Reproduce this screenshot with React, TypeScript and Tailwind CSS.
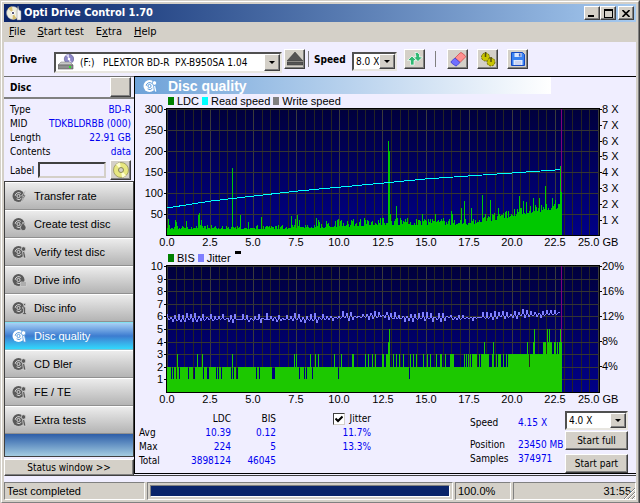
import type { ReactNode } from "react";
import clsx from "clsx";

const PLOT_W = 432;
const PLOT_H = 126;
const END_COL = 394;

const raised = "border border-t-white border-l-white border-r-[#404040] border-b-[#404040] bg-[#d4d0c8] shadow-[inset_-1px_-1px_0_#808080]";
const sunken = "border border-t-[#808080] border-l-[#808080] border-r-white border-b-white";

const xLabels = ["0.0", "2.5", "5.0", "7.5", "10.0", "12.5", "15.0", "17.5", "20.0", "22.5"];

// column in the plot -> bar height
const ldcPeaks: Record<number, number> = {
  1: 16, 8: 15, 9: 13, 19: 14, 31: 20, 32: 22, 34: 15, 65: 67, 73: 20, 81: 13, 94: 18, 111: 10,
  124: 19, 128: 16, 130: 20, 132: 15, 149: 17, 159: 14, 168: 14, 180: 14, 186: 16, 193: 16, 200: 15,
  205: 14, 211: 15, 221: 94, 222: 84, 223: 21, 224: 14, 229: 29, 255: 21, 268: 21, 284: 24, 285: 21,
  294: 27, 297: 34, 304: 27, 315: 40, 323: 35, 331: 27, 352: 39, 356: 34, 359: 33, 366: 37, 372: 37,
  378: 49, 385: 37, 388: 35, 391: 31, 393: 69, 394: 43,
};

const speedLine = "0,99 44,92 87,87 131,82 174,78 217,74 258,70 301,67 345,64 388,61 393,60";

const bisGaps = [
  4, 6, 9, 12, 21, 26, 27, 36, 40, 41, 49, 51, 54, 64, 66, 69, 70, 89, 92, 105, 106, 107, 132, 137, 139, 145, 171, 242,
];
const bisThree = [
  10, 30, 35, 65, 127, 129, 143, 148, 151, 167, 174, 185, 186, 198, 201, 205, 208, 215, 216, 219, 220,
  221, 226, 229, 232, 236, 243, 246, 249, 256, 260, 263, 269, 273, 274, 278, 283, 284, 285, 286, 297, 299,
  301, 303, 305, 306, 307, 308, 309, 312, 314, 315, 316, 317, 318, 319, 320, 321, 325, 329, 331, 332, 333, 336, 339,
];
const bisFour = [221, 317, 326, 360, 366, 376, 377, 378, 381, 382, 383, 384, 387, 388, 390, 392, 394];
const bisFive = [222, 367, 380, 382, 393];

function noise(n: number) {
  const v = Math.sin(n * 12.9898 + 4.137) * 43758.5453;
  return v - Math.floor(v);
}

function ldcBase(col: number) {
  if (col < 130) return 6;
  if (col < 220) return 6 + ((col - 130) / 90) * 4;
  if (col < 300) return 10;
  if (col < 345) return 10 + ((col - 300) / 45) * 8;
  return 18 + ((col - 345) / 50) * 9;
}

function ldcPath() {
  let d = "";
  for (let c = 0; c <= END_COL; c++) {
    const n = noise(c);
    const spread = c < 150 ? 4 : 8;
    const h = ldcPeaks[c] ?? Math.round(ldcBase(c) + n * n * spread);
    d += `M${c} ${PLOT_H}v${-h}h1v${h}z`;
  }
  return d;
}

function bisUnits(c: number) {
  if (bisFive.includes(c)) return 5;
  if (bisFour.includes(c)) return 4;
  if (bisThree.includes(c)) return 3;
  if (bisGaps.includes(c)) return 1;
  if (c >= 341 && c !== 362) return 3;
  return 2;
}

function bisPath() {
  let d = "";
  for (let c = 0; c <= END_COL; c++) {
    const h = Math.round(bisUnits(c) * 12.6);
    d += `M${c} ${PLOT_H}v${-h}h1v${h}z`;
  }
  return d;
}

function jitterBase(c: number) {
  if (c < 150) return 53;
  if (c < 200) return 53 - (c - 150) / 16;
  if (c < 222) return 50;
  if (c < 300) return 52;
  return 52 - (c - 300) / 20;
}

function jitterPoints() {
  const pts: string[] = [];
  for (let c = 0; c < END_COL; c++) {
    const n = noise(c + 900);
    const swing = c % 4 === 0 ? -n * 6 : c % 4 === 2 ? n * 4 : (n - 0.5) * 2;
    pts.push(`${c},${Math.round(jitterBase(c) + swing)}`);
  }
  return pts.join(" ");
}

type ChartProps = {
  id: string;
  left: string[];
  leftStep: number;
  right: string[];
  rightStep: number;
  rows: number;
  children: ReactNode;
};

function Chart({ id, left, leftStep, right, rightStep, rows, children }: ChartProps) {
  return (
    <svg viewBox="0 0 501 142" className="block w-full overflow-visible font-['Liberation_Sans',sans-serif] text-[11px]">
      <defs>
        <linearGradient id={id} x1="0" y1="0" x2="0" y2="1">
          <stop offset="0" stopColor="#00003c" />
          <stop offset="1" stopColor="#000088" />
        </linearGradient>
      </defs>
      <rect x="31" y="0" width="434" height="128" fill="#000" />
      <g transform="translate(32 1)">
        <rect width={PLOT_W} height={PLOT_H} fill={`url(#${id})`} />
        <g shapeRendering="crispEdges">
          {Array.from({ length: 51 }, (_, i) => (
            <rect key={i} x={Math.round(i * 8.62)} y="0" width="1" height={PLOT_H} fill={i % 5 === 0 ? "#3a3a3a" : "#242424"} />
          ))}
          {Array.from({ length: rows }, (_, i) => (
            <rect key={i} x="0" y={Math.round((i * PLOT_H) / rows)} width={PLOT_W} height="1" fill="#343434" />
          ))}
          {children}
        </g>
      </g>
      <g fill="#000">
        {left.map((t, i) => (
          <g key={t}>
            <rect x="29" y={Math.round(i * leftStep) + 1} width="3" height="1" />
            <text x="28" y={Math.round(i * leftStep) + 5} textAnchor="end">{t}</text>
          </g>
        ))}
        {right.map((t, i) => (
          <g key={t}>
            <rect x="465" y={Math.round(i * rightStep) + 1} width="2" height="1" />
            <text x="467" y={Math.round(i * rightStep) + 5}>{t}</text>
          </g>
        ))}
        {xLabels.map((t, i) => (
          <text key={t} x={32 + Math.round(i * 43.1)} y="138" textAnchor="middle">{t}</text>
        ))}
        <text x="443" y="138">25.0 GB</text>
      </g>
    </svg>
  );
}

function Legend({ items }: { items: [string, string][] }) {
  return (
    <div className="flex h-[14px] items-center gap-[3px] pl-[33px] font-['Liberation_Sans',sans-serif] text-[11px] leading-[14px]">
      {items.map(([name, color]) => (
        <span key={name} className="flex items-center gap-[3px]">
          <span className="h-2 w-[6px]" style={{ background: color }} />
          {name}
        </span>
      ))}
    </div>
  );
}

function DiscIcon({ mark, light }: { mark: string; light?: boolean }) {
  const ink = light ? "#fff" : "#5a5a5a";
  const paper = light ? "#5b9bdc" : "#d6d6d6";
  return (
    <svg viewBox="0 0 15 14" className="h-[14px] w-[15px] shrink-0">
      <circle cx="6.5" cy="7" r="6" fill={ink} />
      <path d="M3.2 6.8a3.4 3.4 0 0 1 5.6-2.4M9.4 9.2a3.4 3.4 0 0 1-4.8.6" fill="none" stroke={paper} strokeWidth="1" />
      <circle cx="6.5" cy="7" r="1.6" fill={ink} stroke={paper} />
      {mark === "bolt" && <path d="M13.5 1.5 9.5 7h2L9.5 12.5 14 6h-2z" fill={ink} stroke={paper} strokeWidth=".7" />}
      {mark === "flame" && <path d="M11 5c0 2-2.5 3-2.5 5.5S10 13.5 11.5 13.5 14 12.5 14 10.5 12 8 11 5z" fill={ink} stroke={paper} strokeWidth=".7" />}
      {mark === "drive" && <path d="M8.5 9h6v4h-6zM9 11h5" fill="#999" stroke={paper} strokeWidth=".7" />}
      {mark === "info" && <path d="M11.5 2.5h2v2h-2zM10.5 6h3v6h1v1.5h-4V12h1V7.5h-1z" fill={ink} stroke={paper} strokeWidth=".6" />}
      {mark === "lens" && (
        <g fill={ink} stroke={paper} strokeWidth=".8">
          <circle cx="11.5" cy="4" r="2.3" />
          <path d="M10.5 6.5h2l1.5 6.5h-2.5z" />
        </g>
      )}
    </svg>
  );
}

function ComboBox({ id, label, value, className, icon }: { id: string; label: string; value: string; className: string; icon?: ReactNode }) {
  return (
    <div className={clsx("relative flex items-center border-2 border-t-[#505050] border-l-[#505050] border-r-[#e8e6e0] border-b-[#e8e6e0] bg-white", className)}>
      {icon}
      <select id={id} aria-label={label} defaultValue={value} className="h-full min-w-0 flex-1 appearance-none bg-transparent pl-[2px] outline-none">
        <option value={value}>{value}</option>
      </select>
      <span className={clsx("pointer-events-none flex h-full w-4 shrink-0 items-center justify-center", raised)}>
        <span className="border-x-[3px] border-t-[3px] border-x-transparent border-t-black" />
      </span>
    </div>
  );
}

function ToolButton({ label, children }: { label: string; children?: ReactNode }) {
  return (
    <button type="button" aria-label={label} className={clsx("flex h-5 w-[21px] shrink-0 items-center justify-center", raised)}>
      {children}
    </button>
  );
}

function TitleBar() {
  return (
    <header className="flex h-[18px] items-center bg-linear-to-r from-[#0a246a] to-[#a6caf0] pr-[2px] pl-[2px]">
      <svg viewBox="0 0 16 16" className="size-4">
        <circle cx="7" cy="8" r="6.5" fill="#eeeede" stroke="#99a" strokeWidth=".5" />
        <path d="M7 8 2 3.5A6.5 6.5 0 0 1 6 1.6zM7 8l3.5 5.5a6.5 6.5 0 0 1-4 1z" fill="#d8c070" />
        <circle cx="7" cy="8" r="1.6" fill="#446" stroke="#fff" />
        <path d="M12 1l1 4 2 1v9h-4V6z" fill="#f4f4f4" stroke="#888" strokeWidth=".5" />
      </svg>
      <h1 className="flex-1 pl-[2px] text-[11px] font-bold text-white">Opti Drive Control 1.70</h1>
      <div className="flex">
        <button type="button" aria-label="Minimize" className={clsx("flex h-[14px] w-4 items-end pb-[2px] pl-[3px]", raised)}>
          <span className="h-[2px] w-[6px] bg-black" />
        </button>
        <button type="button" aria-label="Maximize" className={clsx("flex h-[14px] w-4 items-center justify-center", raised)}>
          <span className="h-[9px] w-[9px] border border-t-2 border-black" />
        </button>
        <button type="button" aria-label="Close" className={clsx("ml-[2px] flex h-[14px] w-4 items-center justify-center", raised)}>
          <svg viewBox="0 0 8 7" className="h-[7px] w-2"><path d="M.5 0l7 7M7.5 0l-7 7" stroke="#000" strokeWidth="1.6" /></svg>
        </button>
      </div>
    </header>
  );
}

function MenuBar() {
  const menus = ["File", "Start test", "Extra", "Help"];
  return (
    <nav className="flex h-5 items-center gap-3 pl-[5px]">
      {menus.map((m) => {
        const at = m === "Extra" ? 1 : 0;
        return (
          <button key={m} type="button">
            {m.slice(0, at)}<u>{m[at]}</u>{m.slice(at + 1)}
          </button>
        );
      })}
    </nav>
  );
}

function Toolbar() {
  return (
    <div className="flex h-[34px] items-center bg-[#f0eeff] pl-[6px] text-[10px]">
      <label htmlFor="drive" className="w-11 font-bold">Drive</label>
      <ComboBox
        id="drive"
        label="Drive"
        value={"(F:)\u00a0\u00a0\u00a0PLEXTOR BD-R\u00a0\u00a0PX-B950SA 1.04"}
        className="mt-[6px] h-[21px] w-[228px]"
        icon={
          <svg viewBox="0 0 16 16" className="mr-1 ml-[2px] size-4 shrink-0">
            <circle cx="11" cy="5" r="4.7" fill="#8c86c8" stroke="#55508c" strokeWidth=".6" />
            <path d="M11 5 8 1.3a5 5 0 0 1 3-1zM11 5l3 3.5-3 1z" fill="#d8d4f4" />
            <circle cx="11" cy="5" r="1.3" fill="#fff" />
            <path d="M3 8h9l3 3H0z" fill="#c8c8c8" stroke="#777" strokeWidth=".5" />
            <path d="M0 11h15v4H0z" fill="#8e8e8e" stroke="#555" strokeWidth=".6" />
            <path d="M11 12h2v2h-2z" fill="#2de02d" />
          </svg>
        }
      />
      <div className="ml-[2px]">
        <ToolButton label="Eject">
          <svg viewBox="0 0 16 14" className="h-[14px] w-4"><path d="M8 0l8 9H0zM0 10h16v3H0z" fill="#555" stroke="#333" strokeWidth=".5" /></svg>
        </ToolButton>
      </div>
      <span className="ml-[3px] h-4 w-px bg-[#808080]" />
      <label htmlFor="speed" className="ml-[5px] w-[38px] font-bold">Speed</label>
      <ComboBox id="speed" label="Speed" value="8.0 X" className="mt-1 h-[19px] w-[45px]" />
      <div className="ml-[7px]">
        <ToolButton label="Refresh">
          <svg viewBox="0 0 16 14" className="h-[14px] w-4" fill="#2fb873" stroke="#fff" strokeWidth=".7">
            <path d="M5 4l4.500 4.500H7V13H3.500V8.500H.5z" />
            <path d="M8 .5h2.500l2 2V5h3L11 9.500 6.500 5H9z" />
          </svg>
        </ToolButton>
      </div>
      <span className="ml-[10px] h-4 w-px bg-[#808080]" />
      <div className="ml-[11px] flex gap-[9px]">
        <ToolButton label="Erase">
          <svg viewBox="0 0 16 15" className="h-[15px] w-4">
            <path d="M5 6 10 1q1-1 2 0l3 2.500q1 1 0 2l-5 5z" fill="#ff9090" stroke="#c44" strokeWidth=".7" />
            <path d="M5 6l5 4.500-3 3q-1 1-2 0L1.500 11q-1-1 0-2z" fill="#7070ff" stroke="#33c" strokeWidth=".7" />
          </svg>
        </ToolButton>
        <ToolButton label="Options">
          <svg viewBox="0 0 16 15" className="h-[15px] w-4" fill="#c8c400" stroke="#55500a" strokeWidth=".8">
            <circle cx="5.5" cy="5" r="4" strokeDasharray="2 1" />
            <circle cx="11" cy="10" r="4" strokeDasharray="2 1" />
            <circle cx="5.5" cy="5" r="3" stroke="none" />
            <circle cx="11" cy="10" r="3" stroke="none" />
            <path d="M5.500 0v5M11 5v5" strokeWidth="1.5" />
          </svg>
        </ToolButton>
        <ToolButton label="Save">
          <svg viewBox="0 0 14 14" className="size-[14px]">
            <path d="M.5.5h11l2 2v11H.5z" fill="#3b82f0" stroke="#1548c0" />
            <path d="M3.500 1h7v4h-7zM2.500 8h9v5h-9z" fill="#dce8ff" />
            <path d="M8 1.500h1.500v3H8zM4 10h6M4 12h6" fill="#1548c0" stroke="#aac" strokeWidth=".6" />
          </svg>
        </ToolButton>
      </div>
    </div>
  );
}

const discInfo = [
  ["Type", "BD-R"],
  ["MID", "TDKBLDRBB (000)"],
  ["Length", "22.91 GB"],
  ["Contents", "data"],
];

const pages = [
  ["Transfer rate", "bolt"],
  ["Create test disc", "flame"],
  ["Verify test disc", "lens"],
  ["Drive info", "drive"],
  ["Disc info", "info"],
  ["Disc quality", "lens"],
  ["CD Bler", "lens"],
  ["FE / TE", "lens"],
  ["Extra tests", "lens"],
];

function Sidebar() {
  return (
    <aside className="flex w-[130px] shrink-0 flex-col border-t border-t-[#707070] bg-[#f0eeff] text-[10px]">
      <div className="flex h-[22px] items-center justify-between border-b-2 border-[#808080] pr-[3px] pl-[6px]">
        <h2 className="font-bold">Disc</h2>
        <ToolButton label="Disc details" />
      </div>
      <dl className="pt-1 pr-[3px] pl-[6px] leading-[14px]">
        {discInfo.map(([name, value]) => (
          <div key={name} className="flex justify-between">
            <dt>{name}</dt>
            <dd className="text-[#0000f0]">{value}</dd>
          </div>
        ))}
      </dl>
      <div className="flex h-[22px] items-center pr-[3px] pl-[6px]">
        <label htmlFor="disc-label" className="w-7">Label</label>
        <input id="disc-label" className="mr-1 h-4 min-w-0 flex-1 border-2 border-t-[#404040] border-l-[#404040] border-r-[#d4d0c8] border-b-[#d4d0c8] bg-[#f0eeff]" />
        <ToolButton label="Read label">
          <svg viewBox="0 0 16 16" className="size-4">
            <circle cx="8" cy="8" r="7.5" fill="#e8e880" stroke="#8a8a50" strokeWidth=".7" />
            <path d="M8 8 3 2.5A7.5 7.5 0 0 1 7 .6zM8 8l5 5.5a7.5 7.5 0 0 1-4 1.9z" fill="#ffffd0" />
            <circle cx="8" cy="8" r="2.5" fill="#d4d0c8" stroke="#8a8a50" />
          </svg>
        </ToolButton>
      </div>
      <nav className="flex flex-1 flex-col border-x border-t border-b border-[#404040] bg-linear-to-b from-[#2050a0] from-[91%] to-[#a4cce0]">
        {pages.map(([name, mark]) => {
          const active = name === "Disc quality";
          return (
            <button
              key={name}
              type="button"
              className={clsx(
                "flex h-7 items-center gap-[7px] border-t border-b pl-[7px] text-left font-['Liberation_Sans',sans-serif] text-[11px]",
                active
                  ? "border-t-[#80e0f0] border-b-[#80c0d0] bg-linear-to-b from-[#a8d0f4] via-[#3c7cd0] to-[#30d8fc] text-white"
                  : "border-t-white border-b-[#909090] bg-linear-to-b from-[#ececec] to-[#b4b4b4]",
              )}
            >
              <DiscIcon mark={mark} light={active} />
              {name}
            </button>
          );
        })}
      </nav>
      <button type="button" className={clsx("mt-[2px] h-[17px] text-center", raised)}>Status window &gt;&gt;</button>
    </aside>
  );
}

function Results() {
  return (
    <section className="flex items-start justify-between pt-1 pr-2 text-[10px]">
      <table className="mt-px leading-[14px]">
        <thead>
          <tr>
            <td className="w-[52px]" />
            <th className="w-11 text-right font-normal">LDC</th>
            <th className="w-[45px] text-right font-normal">BIS</th>
            <th className="w-[95px] font-normal">
              <label className="flex items-center justify-end gap-[5px]">
                <input type="checkbox" defaultChecked className="peer sr-only" />
                <span className="flex size-3 items-center justify-center border border-t-[#404040] border-l-[#404040] border-r-[#d4d0c8] border-b-[#d4d0c8] bg-white">
                  <svg viewBox="0 0 8 8" className="size-2"><path d="M.5 3.500l2.500 2.500 4.500-4.500" fill="none" stroke="#000" strokeWidth="2" /></svg>
                </span>
                Jitter
              </label>
            </th>
          </tr>
        </thead>
        <tbody>
          {[
            ["Avg", "10.39", "0.12", "11.7%"],
            ["Max", "224", "5", "13.3%"],
            ["Total", "3898124", "46045", ""],
          ].map(([name, ...values]) => (
            <tr key={name}>
              <th className="pl-1 text-left font-normal">{name}</th>
              {values.map((v, i) => (
                <td key={i} className="text-right text-[#0000f0]">{v}</td>
              ))}
            </tr>
          ))}
        </tbody>
      </table>
      <div className="flex items-start">
        <dl className="mt-[5px] grid grid-cols-[48px_47px] leading-[14px]">
          <dt>Speed</dt>
          <dd className="mb-2 text-[#0000f0]">4.15 X</dd>
          <dt>Position</dt>
          <dd className="whitespace-nowrap text-[#0000f0]">23450 MB</dd>
          <dt>Samples</dt>
          <dd className="text-[#0000f0]">374971</dd>
        </dl>
        <div className="flex w-[63px] flex-col">
          <ComboBox id="test-speed" label="Test speed" value="4.0 X" className="h-[19px]" />
          <button type="button" className={clsx("mt-px h-[19px]", raised)}>Start full</button>
          <button type="button" className={clsx("mt-1 h-[19px]", raised)}>Start part</button>
        </div>
      </div>
    </section>
  );
}

function Quality() {
  return (
    <div className="flex min-w-0 flex-1 flex-col border-b border-[#404040] bg-[#f0eeff] pb-px">
      <main className="flex flex-1 flex-col border-t border-b border-l border-black">
        <div className="mr-[85px] flex h-[17px] items-center gap-[10px] bg-linear-to-r from-[#6ea2d8] to-white pl-2">
          <DiscIcon mark="lens" light />
          <h2 className="font-['Liberation_Sans',sans-serif] text-sm leading-4 font-bold text-white">Disc quality</h2>
        </div>
        <Legend items={[["LDC", "#008000"], ["Read speed", "#00ffff"], ["Write speed", "#808080"]]} />
        <Chart
          id="ldc-bg"
          left={["300", "250", "200", "150", "100", "50"]}
          leftStep={21}
          right={["8 X", "7 X", "6 X", "5 X", "4 X", "3 X", "2 X", "1 X"]}
          rightStep={15.8}
          rows={6}
        >
          <path d={ldcPath()} fill="#00c800" />
          <rect x={END_COL} y="0" width="1" height="83" fill="#800080" />
          <polyline points={speedLine} fill="none" stroke="#00ffff" />
        </Chart>
        <div className="mt-px flex">
          <Legend items={[["BIS", "#008000"], ["Jitter", "#8080ff"]]} />
          <span className="ml-1 h-[3px] w-[6px] bg-black" />
        </div>
        <Chart
          id="bis-bg"
          left={["10", "9", "8", "7", "6", "5", "4", "3", "2", "1"]}
          leftStep={12.6}
          right={["20%", "16%", "12%", "8%", "4%"]}
          rightStep={25}
          rows={10}
        >
          <path d={bisPath()} fill="#1cc800" />
          <rect x={END_COL} y="0" width="1" height="76" fill="#800080" />
          <polyline points={jitterPoints()} fill="none" stroke="#8080ff" />
        </Chart>
        <Results />
      </main>
    </div>
  );
}

function StatusBar() {
  return (
    <footer className="flex h-[18px] gap-[2px] font-['Liberation_Sans',sans-serif] text-[11px] leading-[17px]">
      <div className={clsx("w-[141px] shrink-0 pl-[2px]", sunken)}>Test completed</div>
      <div className={clsx("flex-1 p-[2px]", sunken)}>
        <div className={clsx("h-full bg-[#0a246a]", sunken)} role="progressbar" aria-label="Test progress" aria-valuenow={100} />
      </div>
      <div className={clsx("w-14 shrink-0 pl-[2px]", sunken)}>100.0%</div>
      <div className={clsx("relative w-[123px] shrink-0 pr-1 text-right", sunken)}>
        31:55
        <svg viewBox="0 0 12 12" className="absolute right-0 bottom-0 size-3">
          <path d="M12 1 1 12M12 5l-7 7M12 9l-3 3" stroke="#808080" />
          <path d="M12 2 2 12M12 6l-6 6M12 10l-2 2" stroke="#fff" />
        </svg>
      </div>
    </footer>
  );
}

export default function App() {
  return (
    <div className="flex min-h-screen flex-col border border-[#d4d0c8] border-r-[#404040] border-b-[#404040] bg-[#d4d0c8] font-['DejaVu_Sans_Condensed','DejaVu_Sans',sans-serif] text-[11px] text-black">
      <div className="flex flex-1 flex-col border border-t-white border-l-white border-r-[#808080] border-b-[#808080] p-[2px]">
        <TitleBar />
        <MenuBar />
        <Toolbar />
        <div className="flex flex-1 bg-[#f0eeff] pb-[6px]">
          <Sidebar />
          <Quality />
        </div>
        <StatusBar />
      </div>
    </div>
  );
}
